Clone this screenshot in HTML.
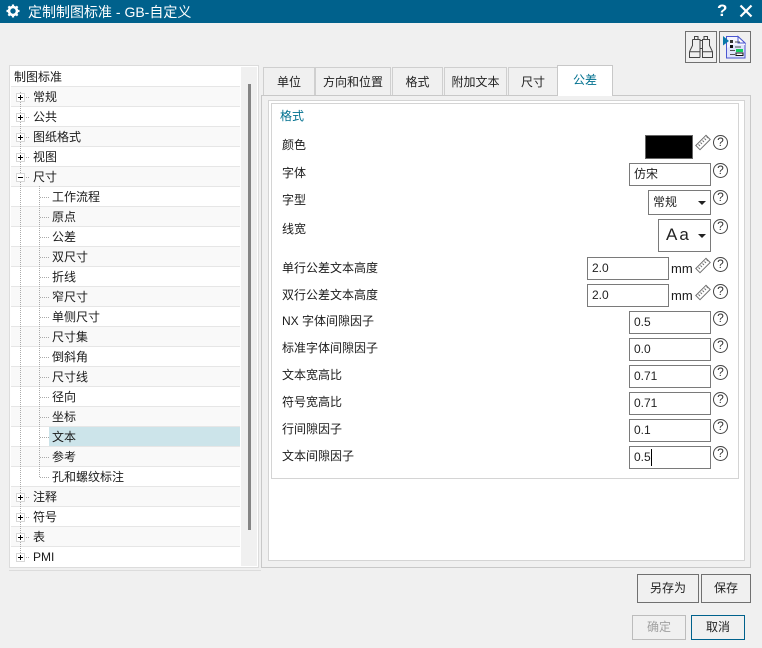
<!DOCTYPE html>
<html><head><meta charset="utf-8">
<style>
html,body{margin:0;padding:0}
body{width:762px;height:648px;overflow:hidden;background:#f0f0f0;position:relative;font:12px/16px "Liberation Sans","Noto Sans CJK SC",sans-serif;color:#1a1a1a}
div,svg,span{position:absolute;box-sizing:border-box}
.t{white-space:nowrap}
.title{left:0;top:0;width:762px;height:23px;background:#00618c}
.row{left:11px;width:229px;height:20px;border-bottom:1px solid #e6e6e6}
.row.o{background:#f9f9f9}
.row.w{background:#fff}
.exp{left:16px;width:9px;height:9px;border:1px solid #d8d8d8;background:#fff}
.exp:before{content:"";position:absolute;left:1px;top:3px;width:5px;height:1px;background:#000}
.exp.p:after{content:"";position:absolute;left:3px;top:1px;width:1px;height:5px;background:#000}
.dh{height:1px;background:repeating-linear-gradient(90deg,#aaa 0 1px,transparent 1px 2px)}
.dv{width:1px;background:repeating-linear-gradient(180deg,#aaa 0 1px,transparent 1px 2px)}
.tab{top:67px;height:29px;background:#f0f0f0;border:1px solid #cfcfcf;border-bottom:0;text-align:center;line-height:28px;color:#222}
.f{background:#fff;border:1px solid #7a7a7a;height:23px;line-height:21px;padding-left:4px;color:#222}
.btn{background:#f0f0f0;border:1px solid #707070;text-align:center;color:#222}
.lb{left:282px;color:#1a1a1a}
.h{left:713px;width:15px;height:15px;border:1px solid #444;border-radius:50%;text-align:center;line-height:13px;font-size:12px;color:#333}
</style></head><body>
<div class="title"></div>
<svg style="left:5px;top:3px" width="16" height="16" viewBox="0 0 16 16"><circle cx="8" cy="8" r="4" fill="none" stroke="#fff" stroke-width="2.6"/><path d="M8 1.500v2.500M8 12v2.500M1.500 8H4M12 8h2.500M3.400 3.400l1.800 1.800M10.800 10.800l1.800 1.800M3.400 12.600l1.800-1.800M10.800 5.200l1.800-1.800" stroke="#fff" stroke-width="2.2"/></svg>
<div class="t" style="left:28px;top:4px;color:#fff;font-size:14px;line-height:17px">定制制图标准 - GB-自定义</div>
<div class="t" style="left:717px;top:0;color:#fff;font-size:17px;font-weight:bold;line-height:22px">?</div>
<svg style="left:739px;top:4px" width="14" height="14" viewBox="0 0 14 14"><path d="M1.500 1.500l11 11M12.500 1.500l-11 11" stroke="#fff" stroke-width="2.2"/></svg>

<div style="left:685px;top:31px;width:32px;height:32px;border:1px solid #707070"></div>
<svg style="left:688px;top:34px" width="26" height="26" viewBox="0 0 26 26" fill="none" stroke="#444" stroke-width="1"><path d="M6.500 2.500h3.500v3h-3.500zM16 2.500h3.500v3H16zM4.500 5.500h7.500v18M4.500 5.500v6l-3 6.200M1.500 17.700v5.800H12M1.500 17.700H12M14.500 5.500h7v6l3 6.200v5.800H14.500zM14.500 17.700h10M12 6.500h2.500M12 14.500h2.500"/></svg>
<div style="left:719px;top:31px;width:32px;height:32px;border:1px solid #707070"></div>
<svg style="left:722px;top:34px" width="26" height="26" viewBox="0 0 26 26"><path d="M4.500 2.500h11.500l7 6.500v15H4.500z" fill="#dfe3fb" stroke="#4a56d0"/><path d="M5 3h10.500v6H23v2H11L5 14z" fill="#f4f5ff"/><path d="M16 2.500v6.500h7z" fill="#fff" stroke="#4a56d0"/><path d="M1 2v9.500L7 7z" fill="#0a78a8"/><rect x="8" y="6" width="3" height="3" fill="#333"/><rect x="8" y="11" width="3" height="3" fill="#111"/><path d="M13 8h5M13 13h6M8 16.500h5M8 20.500h5" stroke="#555"/><rect x="14" y="15" width="7" height="3" fill="#12d060"/><rect x="14" y="19" width="7" height="2.500" fill="#fff" stroke="#111" stroke-width="1"/></svg>

<!-- tree -->
<div style="left:9px;top:65px;width:250px;height:503px;background:#fff;border:1px solid #dcdcdc"></div>
<div style="left:241px;top:67px;width:16px;height:499px;background:#f0f0f0"></div>
<div style="left:248px;top:84px;width:3px;height:446px;background:#858585"></div>
<div style="left:9px;top:570px;width:252px;height:1px;background:#dcdcdc"></div>
<div class="row w" style="top:67px"></div><div class="t" style="left:14px;top:69px">制图标准</div>
<div class="row o" style="top:87px"></div>
<div class="row w" style="top:107px"></div>
<div class="row o" style="top:127px"></div>
<div class="row w" style="top:147px"></div>
<div class="row o" style="top:167px"></div>
<div class="row w" style="top:187px"></div>
<div class="row o" style="top:207px"></div>
<div class="row w" style="top:227px"></div>
<div class="row o" style="top:247px"></div>
<div class="row w" style="top:267px"></div>
<div class="row o" style="top:287px"></div>
<div class="row w" style="top:307px"></div>
<div class="row o" style="top:327px"></div>
<div class="row w" style="top:347px"></div>
<div class="row o" style="top:367px"></div>
<div class="row w" style="top:387px"></div>
<div class="row o" style="top:407px"></div>
<div class="row w" style="top:427px"></div>
<div style="left:49px;top:427px;width:191px;height:19px;background:#cce4ea"></div>
<div class="row o" style="top:447px"></div>
<div class="row w" style="top:467px"></div>
<div class="row o" style="top:487px"></div>
<div class="row w" style="top:507px"></div>
<div class="row o" style="top:527px"></div>
<div class="row w" style="top:547px;height:19px;border:0"></div>

<div class="dv" style="left:20px;top:92px;height:465px"></div>
<div class="dv" style="left:39px;top:186px;height:292px"></div>
<div class="dh" style="left:26px;top:97px;width:4px"></div>
<div class="dh" style="left:26px;top:117px;width:4px"></div>
<div class="dh" style="left:26px;top:137px;width:4px"></div>
<div class="dh" style="left:26px;top:157px;width:4px"></div>
<div class="dh" style="left:26px;top:177px;width:4px"></div>
<div class="dh" style="left:26px;top:497px;width:4px"></div>
<div class="dh" style="left:26px;top:517px;width:4px"></div>
<div class="dh" style="left:26px;top:537px;width:4px"></div>
<div class="dh" style="left:26px;top:557px;width:4px"></div>
<div class="dh" style="left:40px;top:197px;width:9px"></div>
<div class="dh" style="left:40px;top:217px;width:9px"></div>
<div class="dh" style="left:40px;top:237px;width:9px"></div>
<div class="dh" style="left:40px;top:257px;width:9px"></div>
<div class="dh" style="left:40px;top:277px;width:9px"></div>
<div class="dh" style="left:40px;top:297px;width:9px"></div>
<div class="dh" style="left:40px;top:317px;width:9px"></div>
<div class="dh" style="left:40px;top:337px;width:9px"></div>
<div class="dh" style="left:40px;top:357px;width:9px"></div>
<div class="dh" style="left:40px;top:377px;width:9px"></div>
<div class="dh" style="left:40px;top:397px;width:9px"></div>
<div class="dh" style="left:40px;top:417px;width:9px"></div>
<div class="dh" style="left:40px;top:437px;width:9px"></div>
<div class="dh" style="left:40px;top:457px;width:9px"></div>
<div class="dh" style="left:40px;top:477px;width:9px"></div>

<div class="exp p" style="top:93px"></div>
<div class="exp p" style="top:113px"></div>
<div class="exp p" style="top:133px"></div>
<div class="exp p" style="top:153px"></div>
<div class="exp" style="top:173px"></div>
<div class="exp p" style="top:493px"></div>
<div class="exp p" style="top:513px"></div>
<div class="exp p" style="top:533px"></div>
<div class="exp p" style="top:553px"></div>

<div class="t" style="left:33px;top:89px">常规</div>
<div class="t" style="left:33px;top:109px">公共</div>
<div class="t" style="left:33px;top:129px">图纸格式</div>
<div class="t" style="left:33px;top:149px">视图</div>
<div class="t" style="left:33px;top:169px">尺寸</div>
<div class="t" style="left:52px;top:189px">工作流程</div>
<div class="t" style="left:52px;top:209px">原点</div>
<div class="t" style="left:52px;top:229px">公差</div>
<div class="t" style="left:52px;top:249px">双尺寸</div>
<div class="t" style="left:52px;top:269px">折线</div>
<div class="t" style="left:52px;top:289px">窄尺寸</div>
<div class="t" style="left:52px;top:309px">单侧尺寸</div>
<div class="t" style="left:52px;top:329px">尺寸集</div>
<div class="t" style="left:52px;top:349px">倒斜角</div>
<div class="t" style="left:52px;top:369px">尺寸线</div>
<div class="t" style="left:52px;top:389px">径向</div>
<div class="t" style="left:52px;top:409px">坐标</div>
<div class="t" style="left:52px;top:429px">文本</div>
<div class="t" style="left:52px;top:449px">参考</div>
<div class="t" style="left:52px;top:469px">孔和螺纹标注</div>
<div class="t" style="left:33px;top:489px">注释</div>
<div class="t" style="left:33px;top:509px">符号</div>
<div class="t" style="left:33px;top:529px">表</div>
<div class="t" style="left:33px;top:549px">PMI</div>

<!-- tabs -->
<div class="tab" style="left:263px;width:52px">单位</div>
<div class="tab" style="left:315px;width:76px">方向和位置</div>
<div class="tab" style="left:392px;width:51px">格式</div>
<div class="tab" style="left:444px;width:63px">附加文本</div>
<div class="tab" style="left:508px;width:50px">尺寸</div>
<div style="left:261px;top:95px;width:490px;height:473px;background:#f0f0f0;border:1px solid #c8c8c8"></div>
<div style="left:268px;top:100px;width:477px;height:461px;background:#fff;border:1px solid #d4d4d4"></div>
<div style="left:271px;top:103px;width:468px;height:376px;background:#fff;border:1px solid #d4d4d4"></div>
<div class="tab" style="left:557px;top:65px;width:56px;height:31px;background:#fff;border-color:#c8c8c8;color:#00708f;line-height:29px">公差</div>
<div class="t" style="left:280px;top:108px;color:#00708f">格式</div>

<div class="t lb" style="top:137px">颜色</div>
<div class="t lb" style="top:165px">字体</div>
<div class="t lb" style="top:192px">字型</div>
<div class="t lb" style="top:221px">线宽</div>
<div class="t lb" style="top:260px">单行公差文本高度</div>
<div class="t lb" style="top:287px">双行公差文本高度</div>
<div class="t lb" style="top:313px">NX 字体间隙因子</div>
<div class="t lb" style="top:340px">标准字体间隙因子</div>
<div class="t lb" style="top:367px">文本宽高比</div>
<div class="t lb" style="top:394px">符号宽高比</div>
<div class="t lb" style="top:421px">行间隙因子</div>
<div class="t lb" style="top:448px">文本间隙因子</div>

<div style="left:645px;top:135px;width:48px;height:24px;background:#000;border:1px solid #666"></div>
<div class="f" style="left:629px;top:163px;width:82px">仿宋</div>
<div class="f" style="left:648px;top:190px;width:63px;height:25px;line-height:23px">常规</div>
<svg style="left:698px;top:201px" width="8" height="4"><path d="M0 0h8L4 4z" fill="#222"/></svg>
<div class="f" style="left:658px;top:219px;width:53px;height:33px;font-size:17px;line-height:29px;letter-spacing:2px;padding-left:7px">Aa</div>
<svg style="left:698px;top:234px" width="8" height="4"><path d="M0 0h8L4 4z" fill="#222"/></svg>
<div class="f" style="left:587px;top:257px;width:82px">2.0</div>
<div class="f" style="left:587px;top:284px;width:82px">2.0</div>
<div class="t" style="left:671px;top:261px;font-size:13px">mm</div>
<div class="t" style="left:671px;top:288px;font-size:13px">mm</div>
<div class="f" style="left:629px;top:311px;width:82px">0.5</div>
<div class="f" style="left:629px;top:338px;width:82px">0.0</div>
<div class="f" style="left:629px;top:365px;width:82px">0.71</div>
<div class="f" style="left:629px;top:392px;width:82px">0.71</div>
<div class="f" style="left:629px;top:419px;width:82px">0.1</div>
<div class="f" style="left:629px;top:446px;width:82px">0.5</div>
<div style="left:651px;top:449px;width:1px;height:17px;background:#000"></div>

<svg style="left:695px;top:134px" width="16" height="17" viewBox="0 0 16 17" fill="#fff" stroke="#707070"><path d="M.8 11.500L11 1.300l4.200 4.200L5 15.700z"/><path d="M3.500 10.500l1.500 1.500M5.500 8.500l1.500 1.500M7.500 6.500l1.500 1.500M9.500 4.500l1.500 1.500M11.500 2.500l1.500 1.500" fill="none"/></svg>
<svg style="left:695px;top:257px" width="16" height="17" viewBox="0 0 16 17" fill="#fff" stroke="#707070"><path d="M.8 11.500L11 1.300l4.200 4.200L5 15.700z"/><path d="M3.500 10.500l1.500 1.500M5.500 8.500l1.500 1.500M7.500 6.500l1.500 1.500M9.500 4.500l1.500 1.500M11.500 2.500l1.500 1.500" fill="none"/></svg>
<svg style="left:695px;top:284px" width="16" height="17" viewBox="0 0 16 17" fill="#fff" stroke="#707070"><path d="M.8 11.500L11 1.300l4.200 4.200L5 15.700z"/><path d="M3.500 10.500l1.500 1.500M5.500 8.500l1.500 1.500M7.500 6.500l1.500 1.500M9.500 4.500l1.500 1.500M11.500 2.500l1.500 1.500" fill="none"/></svg>

<div class="h" style="top:135px">?</div>
<div class="h" style="top:163px">?</div>
<div class="h" style="top:190px">?</div>
<div class="h" style="top:219px">?</div>
<div class="h" style="top:257px">?</div>
<div class="h" style="top:284px">?</div>
<div class="h" style="top:311px">?</div>
<div class="h" style="top:338px">?</div>
<div class="h" style="top:365px">?</div>
<div class="h" style="top:392px">?</div>
<div class="h" style="top:419px">?</div>
<div class="h" style="top:446px">?</div>

<div class="btn" style="left:637px;top:574px;width:62px;height:29px;line-height:27px">另存为</div>
<div class="btn" style="left:701px;top:574px;width:50px;height:29px;line-height:27px">保存</div>
<div class="btn" style="left:632px;top:615px;width:54px;height:25px;line-height:23px;border-color:#bcbcbc;color:#a0a0a0">确定</div>
<div class="btn" style="left:691px;top:615px;width:54px;height:25px;line-height:23px;border-color:#00618c">取消</div>
</body></html>
